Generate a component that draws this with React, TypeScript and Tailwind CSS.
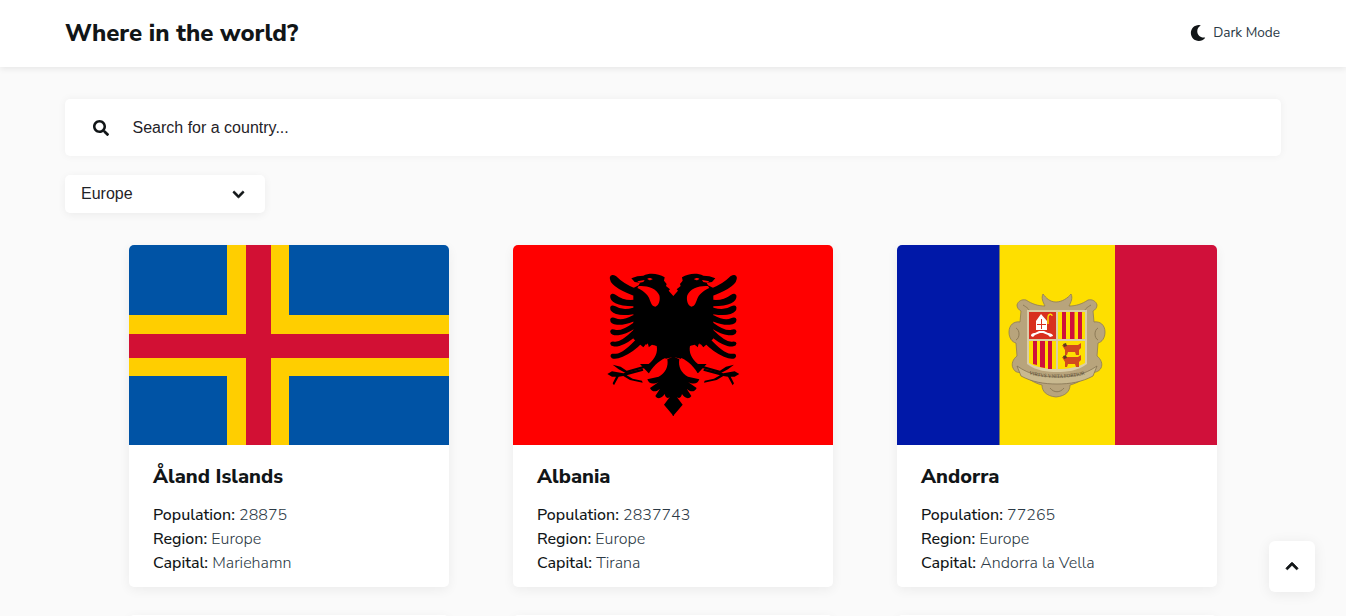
import { FaChevronDown, FaChevronUp, FaMoon, FaSearch } from 'react-icons/fa';

const FEATHERS = [
  'M62 52 C60 66 78 84 130 104 L132 86 C110 78 92 66 76 50 C70 46 63 46 62 52 Z',
  'M63 108 C62 122 80 136 130 136 L130 122 C108 124 88 116 75 106 C69 102 64 103 63 108 Z',
  'M63 143 C62 157 84 168 130 160 L130 146 C108 152 88 150 75 141 C69 138 64 138 63 143 Z',
  'M63 179 C63 193 90 198 130 182 L130 168 C108 180 90 184 76 177 C70 174 64 174 63 179 Z',
  'M63 214 C64 228 96 228 132 204 L132 190 C110 206 92 216 76 212 C70 210 64 209 63 214 Z',
  'M63 250 C65 264 102 258 136 226 L132 212 C112 232 92 248 76 248 C70 247 64 245 63 250 Z',
  'M64 288 C68 304 118 286 156 246 L145 234 C120 262 96 282 78 284 C72 284 64 282 64 288 Z',
];

function AlandFlag() {
  return (
    <svg viewBox="0 0 320 200" className="block h-[200px] w-[320px]">
      <rect width="320" height="200" fill="#0053a5" />
      <rect x="98" width="62" height="200" fill="#ffce00" />
      <rect y="70" width="320" height="61" fill="#ffce00" />
      <rect x="117" width="25" height="200" fill="#d21034" />
      <rect y="89" width="320" height="24" fill="#d21034" />
    </svg>
  );
}

function EagleHalf() {
  return (
    <g>
      <g stroke="#000" strokeWidth="5" strokeLinejoin="round">
        {FEATHERS.map((d) => (
          <path key={d} d={d} />
        ))}
      </g>
      {/* head and body, the last point runs past the middle so the halves overlap */}
      <path d="M252 108 L250 108 L236 92 L240 88 L228 78 L230 72 L222 62 L224 52 C205 40 178 38 160 47 L142 49 L124 55 L134 66 L150 68 L146 76 L130 84 L130 236 L146 250 L160 262 L168 252 L176 262 L186 254 L200 258 C204 276 196 296 176 312 L150 312 L176 340 L200 330 L228 296 L252 290 Z" />
      <path fill="#ff0000" d="M146 78 C170 76 200 84 208 106 C212 120 206 138 196 140 C184 140 182 124 176 112 C170 100 156 90 142 84 Z" />
      <path fill="#ff0000" d="M142 64 L164 60 L160 66 L148 68 Z" />
      <path fill="#ff0000" d="M172 56 C176 52 186 54 188 58 C182 62 176 61 172 56 Z" />
      <path fill="#ff0000" d="M152 286 C160 274 168 262 172 250 C182 262 172 280 162 292 Z" />
      <path fill="#ff0000" d="M174 294 C184 280 190 268 194 256 C204 270 194 290 182 302 Z" />
      <path fill="#ff0000" d="M176 342 C186 322 204 304 226 294 C234 306 226 326 212 340 C200 348 188 348 176 342 Z" />
      <path d="M252 288 L232 298 C236 320 226 340 206 350 L172 358 C176 372 190 374 206 366 L180 384 C186 398 200 396 210 386 L196 408 C204 420 216 414 224 402 C226 412 232 418 240 410 L222 434 L250 467 L252 467 Z" />
      <path d="M172 322 L108 340 L86 328 L68 314 L92 320 L110 332 L160 318 Z" />
      <path d="M52 342 L66 334 L100 340 L158 326 L160 332 L110 346 L128 356 L156 362 L158 368 L120 360 L100 348 L86 350 L72 376 L68 370 L78 350 L66 350 Z" />
    </g>
  );
}

function AlbaniaFlag() {
  return (
    <svg viewBox="0 0 320 200" className="block h-[200px] w-[320px]">
      <rect width="320" height="200" fill="#ff0000" />
      <g transform="translate(77 15) scale(0.3333)">
        <EagleHalf />
        <g transform="translate(500 0) scale(-1 1)">
          <EagleHalf />
        </g>
      </g>
    </svg>
  );
}

function AndorraFlag() {
  return (
    <svg viewBox="0 0 320 200" className="block h-[200px] w-[320px]">
      <rect width="103" height="200" fill="#0018a8" />
      <rect x="102.5" width="115.5" height="200" fill="#fedf00" />
      <rect x="218" width="102" height="200" fill="#d0103a" />
      {/* crest */}
      <g transform="translate(93 35)" strokeLinejoin="round">
        <path
          fill="#b8a47c"
          stroke="#8d7b57"
          strokeWidth="0.8"
          d="M66 22 C60 22 56 18 53 14 C51 18 53 22 55 26 C48 26 42 24 36 20 C32 19 28 21 27 25 C27 28 29 30 31 31 L30 42 C24 41 19 45 19 52 C19 58 22 62 26 63 L27 76 C23 79 21 84 23 88 C25 93 30 93 32 92 C36 98 44 103 52 105 C52 111 56 116 66 117 C76 116 80 111 80 105 C88 103 96 98 100 92 C104 93 109 92 111 88 C113 84 111 79 107 76 L108 63 C112 62 115 58 115 52 C115 45 110 41 104 42 L103 31 C105 30 107 28 107 25 C106 21 102 19 98 20 C92 24 86 26 79 26 C81 22 83 18 81 14 C78 18 72 22 66 22 Z"
        />
        <path fill="none" stroke="#8d7b57" strokeWidth="1" d="M26 48 C30 50 30 58 26 60 M108 48 C104 50 104 58 108 60 M33 25 C38 28 40 30 38 31 M101 25 C96 28 94 30 96 31 M60 108 C64 113 70 113 74 108" />
        <path fill="#d9cda9" d="M37 30 H97 V84 C88 91 76 92 67 92 C58 92 46 91 37 84 Z" />
        <rect x="39" y="32" width="27" height="27" fill="#d8301f" />
        <path fill="#ffffff" d="M51 34 L57 41 L57 50 L46 50 L46 41 Z" />
        <path fill="#d8301f" d="M51 39 L52 39 L52 49 L51 49 Z M47 44 H56 V45 H47 Z" />
        <path fill="#ffffff" d="M41 56 C41 53 44 53 45 53 L49 51 L54 51 L58 53 C60 53 63 54 63 56 L60 57 L58 55 L53 53 L50 53 L45 55 L43 57 Z" />
        <path fill="none" stroke="#fedf00" strokeWidth="1.4" d="M58 44 L58 37 C58 34 62 33 62 36" />
        <rect x="68" y="32" width="27" height="27" fill="#fedf00" />
        <path fill="#d0103a" d="M72 32 H76 V59 H72 Z M80 32 H84.5 V59 H80 Z M88 32 H92 V59 H88 Z" />
        <path fill="#fedf00" d="M39 61 H66 V89 C56 89 46 87 39 83 Z" />
        <path fill="#d0103a" d="M43 61 H47 V85 L43 84 Z M50 61 H55 V88 L50 87 Z M58 61 H62 V89 L58 89 Z" />
        <path fill="#fedf00" d="M68 61 H95 V83 C88 87 78 89 68 89 Z" />
        <path fill="#d2491f" d="M75 65 L88 65 L91 63 L91 68 L89 70 L89 75 L86 75 L85 72 L78 72 L77 75 L75 75 L75 70 L72 65 Z" />
        <path fill="#d2491f" d="M75 77 L88 77 L91 75 L91 80 L89 82 L89 87 L86 87 L85 84 L78 84 L77 87 L75 87 L75 82 L72 77 Z" />
        <path fill="#5a3a20" d="M73 64 L76 63 L77 66 L74 67 Z M73 76 L76 75 L77 78 L74 79 Z" />
        <path fill="#c9b98f" stroke="#7c6c4c" strokeWidth="0.7" d="M27 86 C40 95 52 97 67 97 C82 97 94 95 107 86 L103 96 C92 102 80 104 67 104 C54 104 42 102 31 96 Z" />
        <path id="crest-motto" fill="none" d="M32 91 C45 100 89 100 102 91" />
        <text fontSize="5" fill="#4f4431" fontFamily="'Liberation Serif', serif">
          <textPath href="#crest-motto" startOffset="50%" textAnchor="middle">
            VIRTVS VNITA FORTIOR
          </textPath>
        </text>
      </g>
    </svg>
  );
}

const COUNTRIES = [
  { name: 'Åland Islands', population: '28875', capital: 'Mariehamn', Flag: AlandFlag },
  { name: 'Albania', population: '2837743', capital: 'Tirana', Flag: AlbaniaFlag },
  { name: 'Andorra', population: '77265', capital: 'Andorra la Vella', Flag: AndorraFlag },
];

const NEXT_ROW = ['a', 'b', 'c'];

function Card({ country }: { country: (typeof COUNTRIES)[number] }) {
  const { Flag } = country;
  return (
    <div className="h-[342px] w-[320px] overflow-hidden rounded-[5px] bg-white shadow-[0_3px_12px_rgba(0,0,0,0.06)]">
      <Flag />
      <div className="px-6 pt-[18px]">
        <h2 className="mb-[13px] text-[20px] leading-[27px] font-extrabold text-[#111517]">{country.name}</h2>
        <p className="text-[16px] leading-6 font-light text-[#2b3945]">
          <span className="font-medium text-[#111517]">Population: </span>
          {country.population}
        </p>
        <p className="text-[16px] leading-6 font-light text-[#2b3945]">
          <span className="font-medium text-[#111517]">Region: </span>
          Europe
        </p>
        <p className="text-[16px] leading-6 font-light text-[#2b3945]">
          <span className="font-medium text-[#111517]">Capital: </span>
          {country.capital}
        </p>
      </div>
    </div>
  );
}

export default function App() {
  return (
    <div className="relative h-[616px] overflow-hidden bg-[#fafafa] font-['Nunito_Sans','Nunito','Lato','Noto_Sans',sans-serif] text-[#111517]">
      <header className="flex h-[67px] items-center justify-between bg-white pr-[66px] pb-[2px] pl-[65px] shadow-[0_2px_6px_rgba(0,0,0,0.08)]">
        <h1 className="text-[24px] font-extrabold">Where in the world?</h1>
        <button className="mt-[2px] flex items-center gap-[7px] text-[13.6px] text-[#2b3945]">
          <FaMoon className="size-4 text-[#111517]" />
          Dark Mode
        </button>
      </header>
      <main className="px-[65px] pt-8">
        <div className="flex h-[57px] items-center rounded-[5px] bg-white pl-7 shadow-[0_0_8px_rgba(0,0,0,0.05)]">
          <FaSearch className="size-4 text-[#111517]" />
          <span className="ml-[23.5px] font-['Liberation_Sans',sans-serif] text-[16px] text-[#1f2328]">Search for a country...</span>
        </div>
        <div className="mt-[19px] flex h-[38px] w-[200px] items-center justify-between rounded-[5px] bg-white pr-[20px] pl-4 shadow-[0_2px_8px_rgba(0,0,0,0.06)]">
          <span className="font-['Liberation_Sans',sans-serif] text-[16px] text-[#1f2328]">Europe</span>
          <FaChevronDown className="size-[13px]" strokeWidth={30} />
        </div>
        <div className="mt-8 grid grid-cols-[320px_320px_320px] justify-center gap-x-16 gap-y-[28px]">
          {COUNTRIES.map((c) => (
            <Card key={c.name} country={c} />
          ))}
          {NEXT_ROW.map((k) => (
            <div key={k} className="h-[342px] w-[320px] rounded-[5px] bg-white shadow-[0_3px_12px_rgba(0,0,0,0.06)]" />
          ))}
        </div>
      </main>
      <button className="absolute top-[541px] left-[1269px] flex h-[51px] w-[46px] items-center justify-center rounded-[6px] bg-white pb-[2px] shadow-[0_2px_14px_rgba(0,0,0,0.07)]">
        <FaChevronUp className="size-[14px]" strokeWidth={30} />
      </button>
    </div>
  );
}
